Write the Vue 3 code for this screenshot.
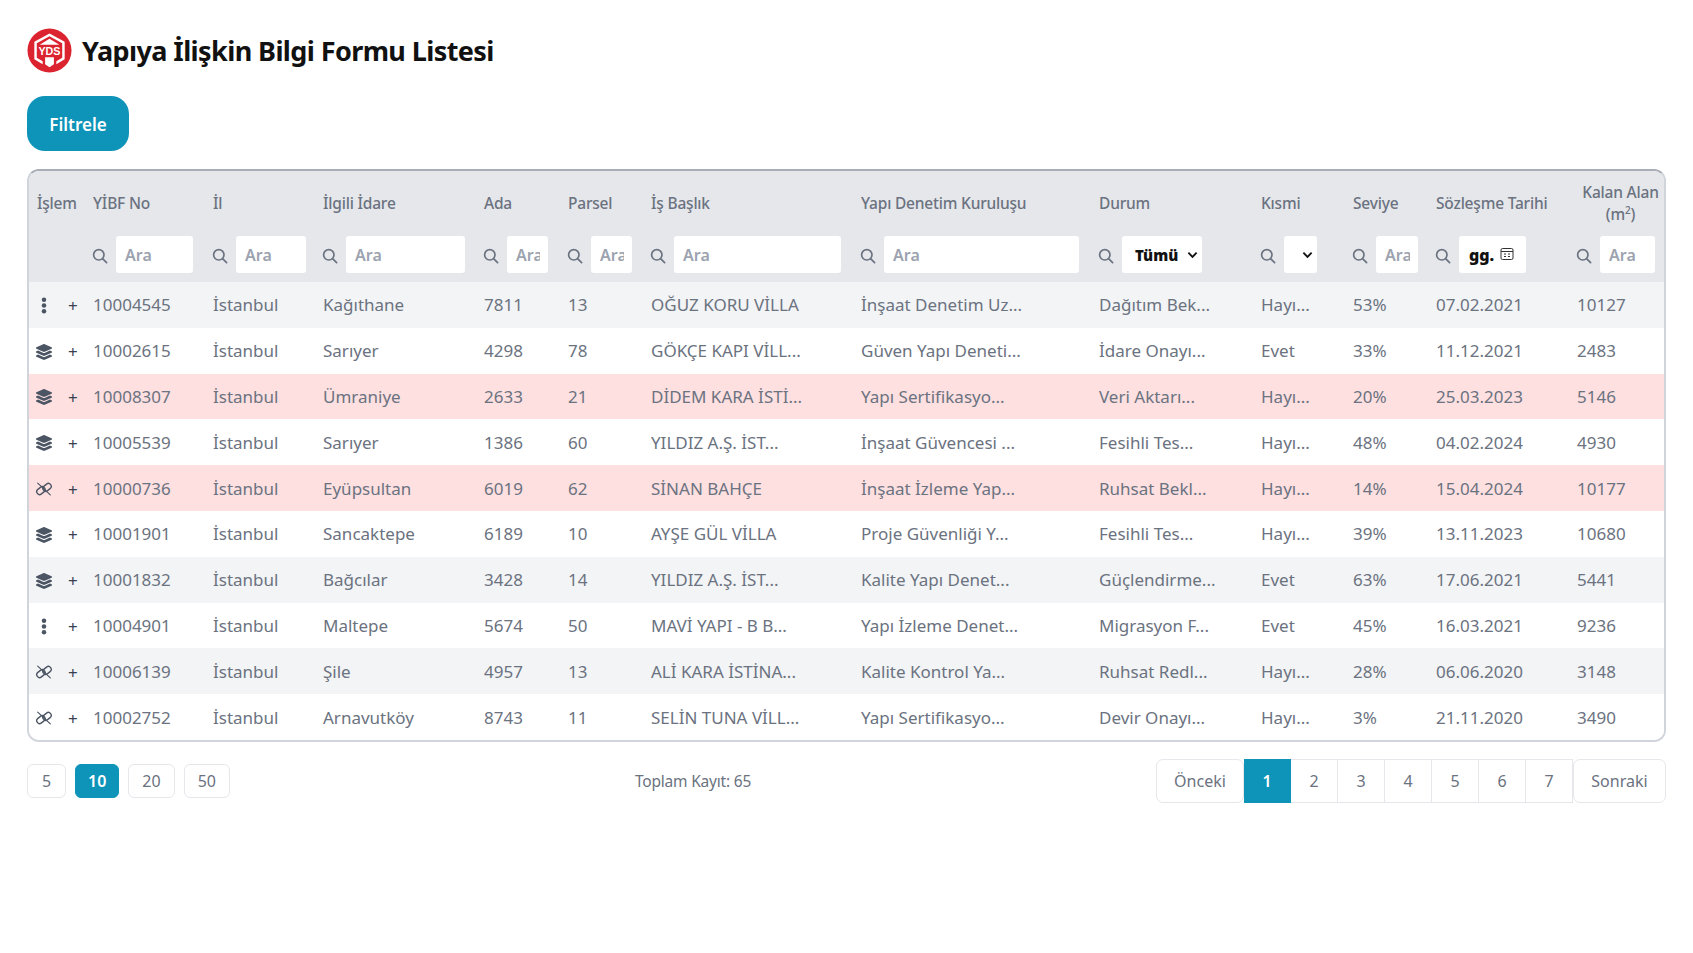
<template>
  <div class="page">
    <div class="title-row">
      <svg class="logo" viewBox="0 0 46 46" xmlns="http://www.w3.org/2000/svg">
        <circle cx="23" cy="23" r="22.5" fill="#dc2430" />
        <path d="M23 5.5 L38.5 14 V32 L30 37 V34 L36 30.5 V15.5 L23 8.5 L10 15.5 V30.5 L16 34 V37 L7.5 32 V14 Z" fill="#fff" />
        <path d="M23 11 L33 17 H13 Z" fill="#fff" />
        <path d="M18.5 30 H27.5 V37 L23 40 L18.5 37 Z" fill="#fff" />
        <text x="23" y="27.5" text-anchor="middle" class="logo-text">YDS</text>
      </svg>
      <h1>Yapıya İlişkin Bilgi Formu Listesi</h1>
    </div>

    <button class="filter-btn">Filtrele</button>

    <div class="table-card">
      <table>
        <colgroup>
          <col v-for="c in columns" :key="c.key" :style="{ width: c.width + 'px' }" />
        </colgroup>
        <thead>
          <tr class="head-labels">
            <th v-for="c in columns" :key="c.key" :class="{ center: c.key === 'alan' }">
              <template v-if="c.key === 'alan'">Kalan Alan<br />(m<sup>2</sup>)</template>
              <template v-else>{{ c.label }}</template>
            </th>
          </tr>
          <tr class="head-filters">
            <th v-for="c in columns" :key="c.key">
              <div v-if="c.filter" class="filter-cell">
                <svg class="search" viewBox="0 0 16 16" fill="none" stroke="#6b7280" stroke-width="1.7" stroke-linecap="round">
                  <circle cx="6.8" cy="6.8" r="5.2" />
                  <path d="M10.8 10.8 L14.6 14.6" />
                </svg>
                <span v-if="c.filter === 'input'" class="fake-input" :style="{ width: c.inputWidth + 'px' }">
                  <span class="placeholder">Ara</span>
                </span>
                <span v-else-if="c.filter === 'select'" class="fake-input select" :style="{ width: c.inputWidth + 'px' }">
                  <b>{{ c.selected }}</b>
                  <svg viewBox="0 0 12 8" class="chevron" fill="none" stroke="#111" stroke-width="2"><path d="M1.5 1.5 L6 6 L10.5 1.5" /></svg>
                </span>
                <span v-else class="fake-input date" :style="{ width: c.inputWidth + 'px' }">
                  <b>gg.</b>
                  <svg viewBox="0 0 14 14" class="calendar" fill="none" stroke="#333" stroke-width="1">
                    <rect x="1" y="1.5" width="12" height="11" rx="1.5" />
                    <path d="M1 4.5 H13 M4 7 H6 M8 7 H10 M4 9.5 H6 M8 9.5 H10" />
                  </svg>
                </span>
              </div>
            </th>
          </tr>
        </thead>
        <tbody>
          <tr v-for="(r, i) in rows" :key="r[1]" :class="{ danger: r[0].endsWith('!'), odd: i % 2 === 0 }">
            <td class="actions">
              <span class="action-icon">
                <svg v-if="kind(r) === 'dots'" class="dots" viewBox="0 0 6 18" fill="#4b5563">
                  <circle cx="3" cy="3" r="2.4" /><circle cx="3" cy="9" r="2.4" /><circle cx="3" cy="15" r="2.4" />
                </svg>
                <svg v-else-if="kind(r) === 'layers'" class="layers" viewBox="0 0 576 512" fill="#4b5563">
                  <path d="M264.5 5.2c14.9-6.9 32.1-6.9 47 0l218.6 101c8.5 3.9 13.9 12.4 13.9 21.8s-5.4 17.9-13.9 21.8l-218.6 101c-14.9 6.9-32.1 6.9-47 0L45.9 149.8C37.4 145.8 32 137.3 32 128s5.4-17.9 13.9-21.8L264.5 5.2zM476.9 209.6l53.2 24.6c8.5 3.9 13.9 12.4 13.9 21.8s-5.4 17.9-13.9 21.8l-218.6 101c-14.9 6.9-32.1 6.9-47 0L45.9 277.8C37.4 273.8 32 265.3 32 256s5.4-17.9 13.9-21.8l53.2-24.6 152 70.2c23.4 10.8 50.4 10.8 73.8 0l152-70.2zm-152 198.2l152-70.2 53.2 24.6c8.5 3.9 13.9 12.4 13.9 21.8s-5.4 17.9-13.9 21.8l-218.6 101c-14.9 6.9-32.1 6.9-47 0L45.9 405.8C37.4 401.8 32 393.3 32 384s5.4-17.9 13.9-21.8l53.2-24.6 152 70.2c23.4 10.8 50.4 10.8 73.8 0z" />
                </svg>
                <svg v-else class="unlink" viewBox="0 0 20 16" fill="none" stroke="#4b5563" stroke-width="1.5" stroke-linecap="round">
                  <rect x="1.6" y="6.6" width="10" height="6.4" rx="3.2" transform="rotate(-38 6.6 9.8)" />
                  <rect x="8.4" y="3" width="10" height="6.4" rx="3.2" transform="rotate(-38 13.4 6.2)" />
                  <path d="M3 1.5 L17 14.5" stroke-width="1.3" />
                </svg>
              </span>
              <span class="plus">+</span>
            </td>
            <td v-for="(v, j) in r.slice(1)" :key="j">{{ v }}</td>
          </tr>
        </tbody>
      </table>
    </div>

    <div class="table-footer">
      <div class="sizes">
        <button v-for="s in [5, 10, 20, 50]" :key="s" class="size-btn" :class="{ active: s === 10 }">{{ s }}</button>
      </div>
      <span class="total">Toplam Kayıt: 65</span>
      <div class="pager">
        <button class="edge left">Önceki</button>
        <button v-for="p in 7" :key="p" class="page-num" :class="{ active: p === 1 }">{{ p }}</button>
        <button class="edge right">Sonraki</button>
      </div>
    </div>
  </div>
</template>

<script setup>
const columns = [
  { key: 'islem', label: 'İşlem', width: 56 },
  { key: 'yibf', label: 'YİBF No', width: 120, filter: 'input', inputWidth: 77 },
  { key: 'il', label: 'İl', width: 110, filter: 'input', inputWidth: 70 },
  { key: 'idare', label: 'İlgili İdare', width: 161, filter: 'input', inputWidth: 119 },
  { key: 'ada', label: 'Ada', width: 84, filter: 'input', inputWidth: 41 },
  { key: 'parsel', label: 'Parsel', width: 83, filter: 'input', inputWidth: 41 },
  { key: 'baslik', label: 'İş Başlık', width: 210, filter: 'input', inputWidth: 167 },
  { key: 'kurulus', label: 'Yapı Denetim Kuruluşu', width: 238, filter: 'input', inputWidth: 195 },
  { key: 'durum', label: 'Durum', width: 162, filter: 'select', selected: 'Tümü', inputWidth: 80 },
  { key: 'kismi', label: 'Kısmi', width: 92, filter: 'select', selected: '', inputWidth: 33 },
  { key: 'seviye', label: 'Seviye', width: 83, filter: 'input', inputWidth: 42 },
  { key: 'tarih', label: 'Sözleşme Tarihi', width: 141, filter: 'date', inputWidth: 67 },
  { key: 'alan', label: 'Kalan Alan', width: 97, filter: 'input', inputWidth: 55 }
]

// first field: icon kind, a trailing ! marks a red row
const rows = [
  ['dots', '10004545', 'İstanbul', 'Kağıthane', '7811', '13', 'OĞUZ KORU VİLLA', 'İnşaat Denetim Uz...', 'Dağıtım Bek...', 'Hayı...', '53%', '07.02.2021', '10127'],
  ['layers', '10002615', 'İstanbul', 'Sarıyer', '4298', '78', 'GÖKÇE KAPI VİLL...', 'Güven Yapı Deneti...', 'İdare Onayı...', 'Evet', '33%', '11.12.2021', '2483'],
  ['layers!', '10008307', 'İstanbul', 'Ümraniye', '2633', '21', 'DİDEM KARA İSTİ...', 'Yapı Sertifikasyo...', 'Veri Aktarı...', 'Hayı...', '20%', '25.03.2023', '5146'],
  ['layers', '10005539', 'İstanbul', 'Sarıyer', '1386', '60', 'YILDIZ A.Ş. İST...', 'İnşaat Güvencesi ...', 'Fesihli Tes...', 'Hayı...', '48%', '04.02.2024', '4930'],
  ['unlink!', '10000736', 'İstanbul', 'Eyüpsultan', '6019', '62', 'SİNAN BAHÇE', 'İnşaat İzleme Yap...', 'Ruhsat Bekl...', 'Hayı...', '14%', '15.04.2024', '10177'],
  ['layers', '10001901', 'İstanbul', 'Sancaktepe', '6189', '10', 'AYŞE GÜL VİLLA', 'Proje Güvenliği Y...', 'Fesihli Tes...', 'Hayı...', '39%', '13.11.2023', '10680'],
  ['layers', '10001832', 'İstanbul', 'Bağcılar', '3428', '14', 'YILDIZ A.Ş. İST...', 'Kalite Yapı Denet...', 'Güçlendirme...', 'Evet', '63%', '17.06.2021', '5441'],
  ['dots', '10004901', 'İstanbul', 'Maltepe', '5674', '50', 'MAVİ YAPI - B B...', 'Yapı İzleme Denet...', 'Migrasyon F...', 'Evet', '45%', '16.03.2021', '9236'],
  ['unlink', '10006139', 'İstanbul', 'Şile', '4957', '13', 'ALİ KARA İSTİNA...', 'Kalite Kontrol Ya...', 'Ruhsat Redl...', 'Hayı...', '28%', '06.06.2020', '3148'],
  ['unlink', '10002752', 'İstanbul', 'Arnavutköy', '8743', '11', 'SELİN TUNA VİLL...', 'Yapı Sertifikasyo...', 'Devir Onayı...', 'Hayı...', '3%', '21.11.2020', '3490']
]

const kind = (r) => r[0].replace('!', '')
</script>

<style>
html, body {
  margin: 0;
  background: #fff;
}
</style>

<style scoped>
.page {
  padding: 28px 27px 0 27px;
  font-family: "Noto Sans", "Open Sans", sans-serif;
  color: #6b7280;
}

.title-row {
  display: flex;
  align-items: center;
  gap: 10px;
  height: 45px;
  margin-bottom: 23px;
}

.logo {
  width: 45px;
  height: 45px;
  flex-shrink: 0;
}

.logo-text {
  font-family: "Liberation Sans", sans-serif;
  font-size: 11px;
  font-weight: 700;
  fill: #fff;
}

h1 {
  margin: 0;
  padding-top: 2px;
  font-size: 27px;
  font-weight: 700;
  letter-spacing: -0.6px;
  color: #111;
  line-height: 1.2;
}

.filter-btn {
  display: block;
  width: 102px;
  height: 55px;
  padding: 2px 0 0;
  border: none;
  border-radius: 18px;
  background: #0e94b8;
  color: #fff;
  font-family: inherit;
  font-size: 17px;
  font-weight: 600;
}

.table-card {
  margin-top: 18px;
  border: 2px solid #d1d5db;
  border-top-color: #a9aeb6;
  border-radius: 12px;
  overflow: hidden;
}

table {
  width: 100%;
  table-layout: fixed;
  border-collapse: collapse;
  font-size: 17px;
}

th {
  background: #e5e7eb;
  font-weight: 500;
  font-size: 15.5px;
  letter-spacing: -0.2px;
  text-align: left;
  padding: 0 8px;
  color: #6b7280;
  white-space: nowrap;
}

.head-labels th {
  height: 60px;
  box-sizing: border-box;
  padding-top: 4px;
  line-height: 22px;
}

.head-labels th.center {
  text-align: center;
  padding: 4px 0 0 6px;
}

sup {
  font-size: 10px;
  line-height: 0;
}

.head-filters th {
  height: 51px;
  box-sizing: border-box;
  padding-top: 5px;
  vertical-align: top;
}

.filter-cell {
  display: flex;
  align-items: center;
  gap: 8px;
  margin-left: -1px;
}

.search {
  width: 16px;
  height: 16px;
  flex-shrink: 0;
  margin-top: 3px;
}

.fake-input {
  display: flex;
  align-items: center;
  height: 37px;
  box-sizing: border-box;
  padding: 0 8px 0 9px;
  background: #fff;
  border-radius: 3px;
  color: #9ca3af;
  font-weight: 600;
  font-size: 16px;
  letter-spacing: 0;
  flex-shrink: 0;
}

.placeholder {
  overflow: hidden;
  white-space: nowrap;
}

.fake-input.select {
  color: #111;
  font-weight: 700;
  padding: 0 4px 0 13px;
}

.fake-input.select b {
  flex-shrink: 0;
  font-size: 15px;
}

.fake-input.date {
  color: #111;
  font-weight: 700;
  padding-left: 10px;
}

.chevron {
  width: 11px;
  height: 8px;
  margin-left: auto;
  flex-shrink: 0;
}

.calendar {
  width: 14px;
  height: 14px;
  margin-left: 6px;
  margin-top: -2px;
  flex-shrink: 0;
}

td {
  height: 45.8px;
  padding: 0 8px;
  box-sizing: border-box;
  white-space: nowrap;
  overflow: hidden;
  background: #fff;
  color: #6b7280;
}

tr.odd td {
  background: #f3f4f6;
}

tr.danger td {
  background: #fee0e0;
}

td.actions {
  padding: 0 0 0 6px;
}

.action-icon {
  display: inline-flex;
  justify-content: center;
  align-items: center;
  width: 18px;
  height: 18px;
  vertical-align: middle;
}

.dots {
  width: 6px;
  height: 17px;
}

.layers {
  width: 18px;
  height: 16px;
}

.unlink {
  width: 20px;
  height: 16px;
}

.plus {
  margin-left: 15px;
  color: #374151;
  font-size: 17px;
  vertical-align: middle;
}

.table-footer {
  display: flex;
  align-items: center;
  justify-content: space-between;
  margin-top: 17px;
}

.sizes {
  display: flex;
  gap: 9px;
}

.size-btn {
  height: 34px;
  min-width: 39px;
  padding: 0 13px;
  border: 1px solid #e5e7eb;
  border-radius: 6px;
  background: #fff;
  color: #6b7280;
  font-family: inherit;
  font-size: 16px;
}

.size-btn.active {
  padding: 0 12px;
  background: #0e94b8;
  border-color: #0e94b8;
  color: #fff;
  font-weight: 600;
}

.total {
  font-size: 15.5px;
  letter-spacing: -0.2px;
}

.pager {
  display: flex;
  height: 44px;
}

.pager button {
  height: 44px;
  border: 1px solid #e5e7eb;
  background: #fff;
  color: #6b7280;
  font-family: inherit;
  font-size: 16px;
  padding: 0;
}

.page-num {
  width: 47px;
  border-left: none !important;
}

.page-num.active {
  background: #0e94b8 !important;
  border-color: #0e94b8 !important;
  color: #fff !important;
  font-weight: 600;
}

.edge.left {
  width: 88px;
  border-radius: 7px;
}

.edge.right {
  width: 93px;
  border-radius: 7px;
}
</style>
